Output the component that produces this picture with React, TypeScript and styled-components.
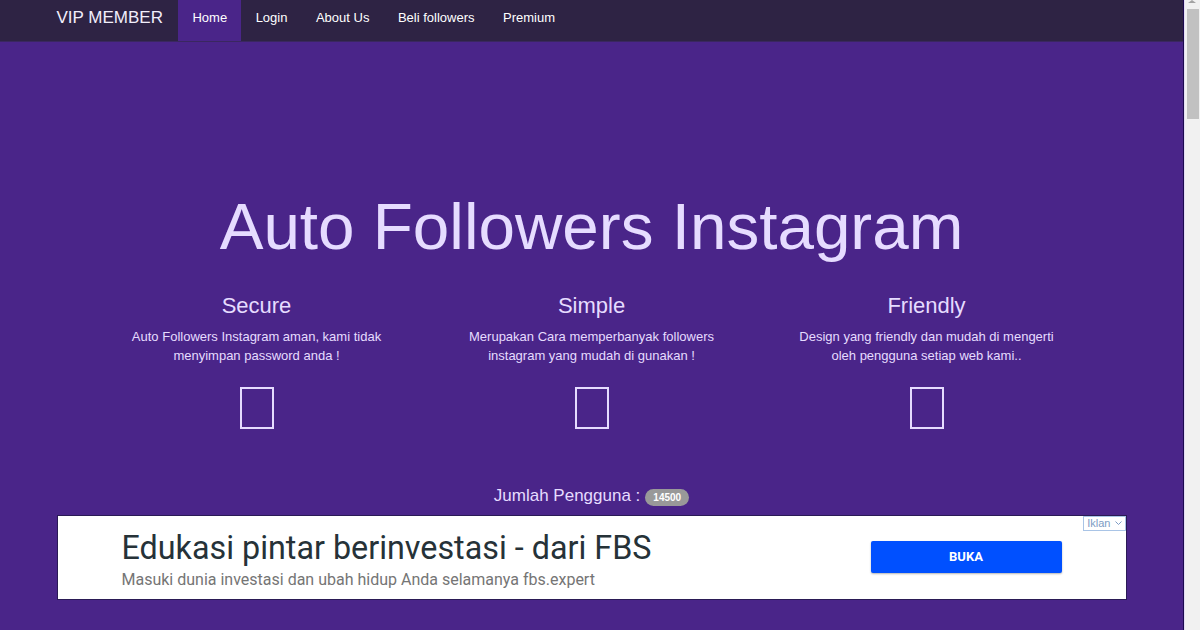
import * as React from "react";
import styled, { createGlobalStyle } from "styled-components";

const Global = createGlobalStyle`
  html, body {
    margin: 0;
    padding: 0;
    background: #4a2589;
    font-family: "Liberation Sans", Arial, sans-serif;
    overflow: hidden;
  }
`;

const Page = styled.div`
  display: flex;
  height: 630px;
  background: #4a2589;
`;

const Main = styled.main`
  flex: 1;
  min-width: 0;
`;

const Scrollbar = styled.div`
  width: 16px;
  border-left: 1px solid #1c0a4e;
  background: #f1f1f1;
  box-shadow: inset 1px 0 0 #e4dcf5;
  display: flex;
  flex-direction: column;
  align-items: center;
`;

const ScrollArrow = styled.div`
  width: 0;
  height: 0;
  border-left: 4px solid transparent;
  border-right: 4px solid transparent;
  border-bottom: 3px solid #a3a3a3;
`;

const ScrollThumb = styled.div`
  width: 12px;
  height: 110px;
  margin: 6px 0 0 2px;
  background: #c1c1c1;
`;

const Navbar = styled.nav`
  background: #2e2344;
  height: 41px;
  border-bottom: 1px solid #3a2760;
`;

const NavInner = styled.div`
  width: 1070px;
  margin: 0 auto;
  display: flex;
  align-items: stretch;
  height: 100%;
`;

const Brand = styled.div`
  color: #f2eefb;
  font-size: 17px;
  line-height: 35px;
  margin-right: 15px;
`;

const NavLink = styled.a<{ $active?: boolean }>`
  color: #ffffff;
  font-size: 13px;
  padding: 0 14px 0 14.5px;
  line-height: 35px;
  text-decoration: none;
  background: ${(p) => (p.$active ? "#4a2589" : "transparent")};
`;

const Hero = styled.section`
  display: flex;
  flex-direction: column;
  align-items: center;
  padding-top: 147px;
  color: #e6dcff;
`;

const Title = styled.h1`
  margin: 0;
  font-size: 65.6px;
  font-weight: 400;
  line-height: 76px;
`;

const Features = styled.div`
  display: grid;
  grid-template-columns: repeat(3, 335px);
  margin-top: 26px;
`;

const Feature = styled.div`
  display: flex;
  flex-direction: column;
  align-items: center;
  text-align: center;
`;

const FeatureTitle = styled.h3`
  margin: 0;
  font-size: 22px;
  font-weight: 400;
  line-height: 30px;
`;

const FeatureText = styled.p`
  margin: 6px 0 0;
  font-size: 13px;
  line-height: 19px;
  width: 270px;
`;

const MissingGlyph = styled.div`
  width: 30px;
  height: 38px;
  border: 2px solid #e6dcff;
  margin-top: 22px;
`;

const Counter = styled.div`
  margin-top: 56px;
  font-size: 17px;
  display: flex;
  align-items: center;
  gap: 5px;
  height: 22px;
`;

const Badge = styled.span`
  background: #999999;
  color: #ffffff;
  font-size: 10px;
  font-weight: 700;
  border-radius: 10px;
  padding: 3px 8px;
  margin-top: 3px;
`;

const Ad = styled.div`
  position: relative;
  width: 1070px;
  height: 85px;
  margin: 8px auto 0;
  background: #ffffff;
  display: flex;
  align-items: center;
  box-sizing: border-box;
  padding: 0 64px;
  border: 1px solid #2a1a55;
`;

const AdCopy = styled.div`
  flex: 1;
  font-family: Roboto, "Noto Sans", sans-serif;
  margin-top: 4px;
`;

const AdTitle = styled.div`
  font-size: 32.3px;
  color: #263238;
  line-height: 38px;
`;

const AdSub = styled.div`
  font-size: 16px;
  color: #757575;
  line-height: 22px;
  margin-top: 2px;
`;

const AdButton = styled.button`
  width: 191px;
  height: 32px;
  background: #0050ff;
  border: none;
  border-radius: 2px;
  color: #ffffff;
  font-family: Roboto, "Noto Sans", sans-serif;
  font-weight: 700;
  font-size: 13px;
  box-shadow: 0 1px 2px rgba(0, 0, 0, 0.3);
  margin-top: -2px;
`;

const AdTag = styled.div`
  position: absolute;
  top: 0;
  right: 0;
  border: 1px solid #a9c4e6;
  color: #7d9cc4;
  font-size: 11px;
  font-family: "Liberation Sans", Arial, sans-serif;
  padding: 0 3px;
  line-height: 13px;
  background: #ffffff;
  display: flex;
  align-items: center;
  gap: 4px;
`;

const features = [
  { title: "Secure", text: "Auto Followers Instagram aman, kami tidak menyimpan password anda !" },
  { title: "Simple", text: "Merupakan Cara memperbanyak followers instagram yang mudah di gunakan !" },
  { title: "Friendly", text: "Design yang friendly dan mudah di mengerti oleh pengguna setiap web kami.." },
];

export default function App() {
  return (
    <Page>
      <Global />
      <Main>
        <Navbar>
          <NavInner>
            <Brand>VIP MEMBER</Brand>
            <NavLink $active>Home</NavLink>
            <NavLink>Login</NavLink>
            <NavLink>About Us</NavLink>
            <NavLink>Beli followers</NavLink>
            <NavLink>Premium</NavLink>
          </NavInner>
        </Navbar>
        <Hero>
          <Title>Auto Followers Instagram</Title>
          <Features>
            {features.map((f) => (
              <Feature key={f.title}>
                <FeatureTitle>{f.title}</FeatureTitle>
                <FeatureText>{f.text}</FeatureText>
                <MissingGlyph />
              </Feature>
            ))}
          </Features>
          <Counter>
            Jumlah Pengguna : <Badge>14500</Badge>
          </Counter>
        </Hero>
        <Ad>
          <AdCopy>
            <AdTitle>Edukasi pintar berinvestasi - dari FBS</AdTitle>
            <AdSub>Masuki dunia investasi dan ubah hidup Anda selamanya fbs.expert</AdSub>
          </AdCopy>
          <AdButton>BUKA</AdButton>
          <AdTag>
            Iklan
            <svg width="7" height="5" viewBox="0 0 7 5">
              <path d="M0.5 0.5 L3.5 3.5 L6.5 0.5" stroke="#7d9cc4" fill="none" strokeWidth="1" />
            </svg>
          </AdTag>
        </Ad>
      </Main>
      <Scrollbar>
        <ScrollArrow />
        <ScrollThumb />
      </Scrollbar>
    </Page>
  );
}
